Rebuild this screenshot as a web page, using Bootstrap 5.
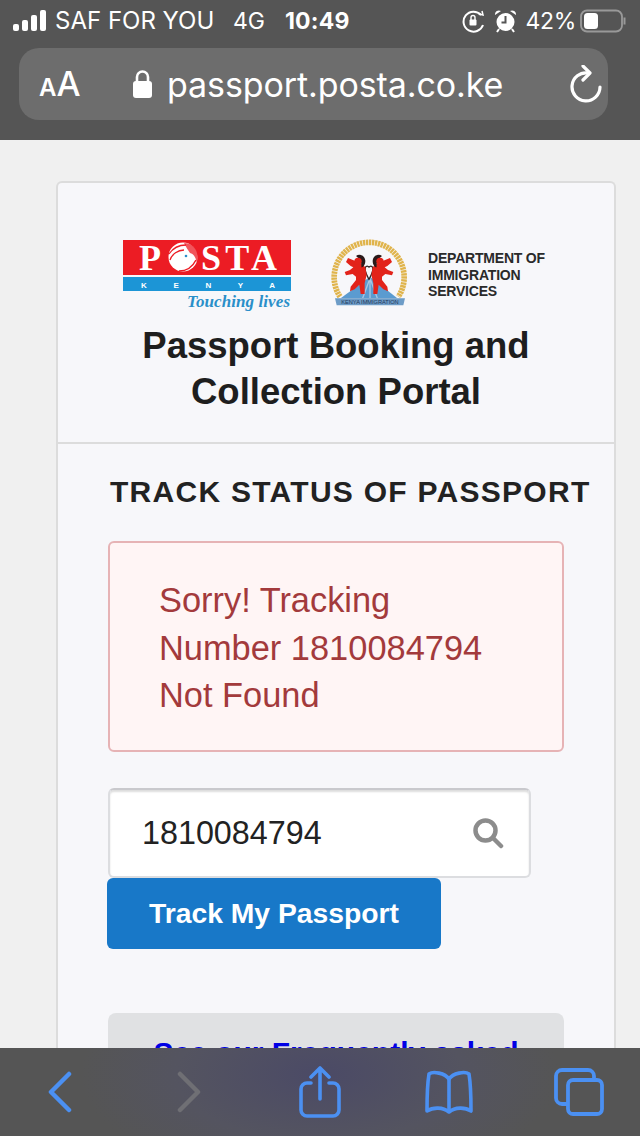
<!DOCTYPE html>
<html lang="en">
<head>
<meta charset="utf-8">
<title>Track status of passport</title>
<link href="https://cdn.jsdelivr.net/npm/bootstrap@5.3.0/dist/css/bootstrap.min.css" rel="stylesheet">
<style>
html,body{margin:0;height:1136px;overflow:hidden}
body{font-family:"Liberation Sans",Arial,sans-serif;background:#f0f0f0;color:#222}
.phone{height:1136px}
.topchrome{height:140px;background:#555;color:#fff;font-family:Inter,"Liberation Sans",sans-serif;flex:none}
.statusrow{height:48px;padding:0 14px 6px 13px;font-size:23px}
.carrier{margin-left:9px;width:178px;white-space:nowrap;font-size:24px}
.net{width:52px}
.clock{font-weight:700;letter-spacing:.2px}
.urlpill{height:72px;margin:0 32px 0 19px;background:#6d6d6d;border-radius:20px;padding:0 19px}
.aa{font-size:34px;font-weight:500;line-height:1;width:94px;white-space:nowrap;margin-left:1px}
.aa small{font-size:24px;font-weight:600}
.urltext{font-size:34px;margin-left:15px;white-space:nowrap;letter-spacing:-.1px}
.viewport{flex:1 1 auto;overflow:hidden;padding:41px 24px 0 56px;min-height:0}
.portal{width:560px;background:#f7f7fa;border:2px solid #dcdcdc;border-bottom:0;border-radius:6px 6px 0 0;height:1200px}
.portalhead{height:261px;border-bottom:2px solid #dcdcdc;padding-top:57px}
.logos{height:70px;padding-left:65px}
.posta{flex:none;margin-bottom:2px}
.emblem{flex:none;margin:0 0 5px 27px}
.dept{font-size:14px;font-weight:700;line-height:16.5px;color:#2a2a2a;margin-left:8px;letter-spacing:-.2px}
.ptitle{font-size:36.5px;font-weight:700;line-height:46px;color:#1e1e1e;margin:13px 0 0;text-align:center}
.portalbody{padding:26px 0 0 50px}
.ttl{font-size:30px;font-weight:700;letter-spacing:1.27px;line-height:44px;color:#222;margin:0 0 27px 2px;white-space:nowrap}
.errbox{width:456px;height:211px;background:#fff5f5;border:2px solid #e6b3b5;border-radius:6px;color:#a33a3c;font-size:34.4px;line-height:47.5px;padding:34px 66px 0 49px;margin:0}
.searchbox{width:423px;height:90px;margin-top:36px;background:#fff;border:2px solid #dcdde0;border-top-color:#c9c9cd;border-radius:6px;padding:0 25px 0 32px;box-shadow:inset 0 2px 2px #ddd;font-size:32.3px;color:#222}
.trackbtn{width:334px;height:71px;margin-left:-1px;background:#1878c8;border:0;border-radius:6px;color:#fff;font-size:28.3px;font-weight:700;display:block;padding:0}
.trackbtn:hover{background:#1878c8;color:#fff}
.faq{width:456px;height:120px;margin-top:64px;background:#e0e1e3;border-radius:8px;text-align:center;padding-top:20px;font-size:30px;font-weight:700;line-height:40px}
.faq a{color:#0000e6;text-decoration:none}
.botchrome{height:88px;flex:none;background:radial-gradient(ellipse 240px 110px at 50% 30%,#4b4a66 0%,#545460 60%,#555 100%);padding:0 0 0 46px}
.ic2{margin-left:97px}.ic3{margin-left:96px}.ic4{margin-left:84px}.ic5{margin-left:81px}
</style>
</head>
<body>
<div class="phone d-flex flex-column">
  <div class="topchrome">
    <div class="statusrow d-flex align-items-center">
      <svg width="33" height="22" viewBox="0 0 33 22" fill="#fff"><rect x="0" y="14" width="6" height="7" rx="2"/><rect x="9" y="10" width="6" height="11" rx="2"/><rect x="18" y="5" width="6" height="16" rx="2"/><rect x="27" y="0" width="6" height="21" rx="2"/></svg>
      <span class="carrier">SAF FOR YOU</span>
      <span class="net">4G</span>
      <span class="clock">10:49</span>
      <span class="ms-auto d-flex align-items-center">
        <svg width="24" height="24" viewBox="0 0 24 24" fill="none" stroke="#fff" stroke-width="2"><path d="M19 6A10 10 0 1 0 21 16"/><path d="M17 5l4 1-1-4" stroke-width="1.5"/><rect x="7.5" y="10.5" width="7" height="6" rx="1" fill="#fff" stroke="none"/><path d="M9 11V8.5a2 2 0 0 1 4 0V11" stroke-width="1.4"/></svg>
        <svg class="ms-2" width="23" height="24" viewBox="0 0 23 24" fill="#fff"><circle cx="11.5" cy="13" r="9"/><path d="M1 6a4 4 0 0 1 6-4zM22 6a4 4 0 0 0-6-4z"/><path d="M11.5 7v6.500h-4" stroke="#555" stroke-width="2" fill="none"/><path d="M5 20l-2 3M18 20l2 3" stroke="#fff" stroke-width="2"/></svg>
        <span class="ms-2" style="letter-spacing:-.3px">42%</span>
        <svg class="ms-1" width="46" height="24" viewBox="0 0 46 24" fill="none"><rect x="1" y="1.500" width="41" height="21" rx="6" stroke="#999" stroke-width="1.800"/><rect x="4" y="4" width="14" height="16" rx="3.500" fill="#fff"/><path d="M44.500 8.500v7" stroke="#999" stroke-width="2"/></svg>
      </span>
    </div>
    <div class="urlpill d-flex align-items-center">
      <span class="aa"><small>A</small>A</span>
      <svg width="19" height="28" viewBox="0 0 19 28" fill="#fff"><rect x="0" y="11" width="19" height="17" rx="3"/><path d="M4 12V7a5.500 5.500 0 0 1 11 0v5" fill="none" stroke="#fff" stroke-width="2.600"/></svg>
      <span class="urltext">passport.posta.co.ke</span>
      <svg class="ms-auto" width="32" height="38" viewBox="0 0 32 38" fill="none" stroke="#fff" stroke-width="3.200" stroke-linecap="round" stroke-linejoin="round" style="margin-right:-13px"><path d="M18 8A14 14 0 1 0 30 22"/><path d="M13 1l7 7-7 7"/></svg>
    </div>
  </div>

  <div class="viewport">
    <div class="portal">
      <div class="portalhead">
        <div class="logos d-flex align-items-center">
          <svg class="posta" width="170" height="76" viewBox="0 -4 170 76">
            <rect x="0" y="0" width="168" height="35" fill="#ec1c24"/>
            <rect x="0" y="37" width="168" height="14" fill="#1c95d6"/>
            <text x="16" y="30" font-family="Liberation Serif,serif" font-weight="700" font-size="36" fill="#fff">P</text>
            <circle cx="60" cy="17" r="14.500" fill="#fff"/>
            <path d="M46 14c4-6 10-9 17-9M47 20c2-6 8-10 14-10" fill="none" stroke="#ec1c24" stroke-width="1.300"/>
            <path d="M61 3c7 0 12 4 14 11l-1 9c-1-5-3-9-7-10-2-3-4-6-6-10z" fill="#ec1c24" opacity=".75"/>
            <path d="M56 31c7 0 13-3 17-11" fill="none" stroke="#ec1c24" stroke-width="1.500"/>
            <circle cx="63" cy="16" r="1.300" fill="#2a8fc9"/>
            <text x="78" y="30" font-family="Liberation Serif,serif" font-weight="700" font-size="36" fill="#fff" textLength="76">STA</text>
            <text x="18" y="48" font-family="Liberation Sans,sans-serif" font-weight="700" font-size="8" fill="#fff" textLength="134">K E N Y A</text>
            <text x="64" y="67" font-family="Liberation Serif,serif" font-style="italic" font-weight="700" font-size="17" fill="#2a8fc9" textLength="103">Touching lives</text>
          </svg>
          <svg class="emblem" width="100" height="85" viewBox="0 0 300 255">
            <path d="M60 200A105 105 0 1 1 235 200" fill="none" stroke="#e0b44c" stroke-width="17" stroke-dasharray="7 2"/>
            <path d="M150 140L232 205H62z" fill="#5b9bd0"/>
            <path d="M128 205l22-60M150 205v-65M172 205l-22-60" stroke="#a8c6e2" stroke-width="4"/>
            <path d="M148 150c-6-12-16-26-12-38 3-5 8-5 11 0M146 150c6-12 16-26 12-38-3-5-8-5-11 0" fill="none" stroke="#2c2222" stroke-width="4"/>
            <g>
              <path d="M84 84L78 96 92 108 100 112 90 120 74 126 78 136 98 132 108 140 108 150 92 170 90 184 104 178 118 164 122 192 134 192 134 160 140 135 136 112 128 104 104 92z" fill="#e2231a"/>
              <path d="M108 78C118 70 134 76 136 92 136 104 130 112 124 112 126 100 120 86 108 78z" fill="#2a1a1a"/>
              <circle cx="114" cy="94" r="11" fill="#e2231a"/>
            </g>
            <g transform="translate(294,0) scale(-1,1)">
              <path d="M84 84L78 96 92 108 100 112 90 120 74 126 78 136 98 132 108 140 108 150 92 170 90 184 104 178 118 164 122 192 134 192 134 160 140 135 136 112 128 104 104 92z" fill="#e2231a"/>
              <path d="M108 78C118 70 134 76 136 92 136 104 130 112 124 112 126 100 120 86 108 78z" fill="#2a1a1a"/>
              <circle cx="114" cy="94" r="11" fill="#e2231a"/>
            </g>
            <path d="M45 205H255L250 226H50z" fill="#6d9cc7"/>
            <text x="150" y="221" font-family="Liberation Sans,sans-serif" font-size="17" text-anchor="middle" fill="#24365a" textLength="172">KENYA IMMIGRATION</text>
          </svg>
          <div class="dept">DEPARTMENT OF<br>IMMIGRATION<br>SERVICES</div>
        </div>
        <h1 class="ptitle">Passport Booking and<br>Collection Portal</h1>
      </div>
      <div class="portalbody">
        <h2 class="ttl">TRACK STATUS OF PASSPORT</h2>
        <div class="errbox" role="alert">Sorry! Tracking Number 1810084794 Not Found</div>
        <div class="searchbox d-flex align-items-center">
          <span>1810084794</span>
          <svg class="ms-auto" width="31" height="31" viewBox="0 0 31 31" fill="none" stroke="#8c8c8c" stroke-width="4.500" stroke-linecap="round"><circle cx="12.500" cy="12.500" r="10"/><path d="M20 20l8 8"/></svg>
        </div>
        <button type="button" class="btn trackbtn">Track My Passport</button>
        <div class="faq"><a href="#">See our Frequently asked</a></div>
      </div>
    </div>
  </div>

  <div class="botchrome d-flex align-items-center">
    <svg width="30" height="42" viewBox="0 0 30 42" fill="none" stroke="#4b90f2" stroke-width="4.500" stroke-linecap="round" stroke-linejoin="round"><path d="M23 3L5 21l18 18"/></svg>
    <svg class="ic2" width="30" height="42" viewBox="0 0 30 42" fill="none" stroke="#6f6f74" stroke-width="4.500" stroke-linecap="round" stroke-linejoin="round"><path d="M7 3l18 18L7 39"/></svg>
    <svg class="ic3" width="42" height="52" viewBox="0 0 42 52" fill="none" stroke="#4b90f2" stroke-width="3.600" stroke-linecap="round" stroke-linejoin="round"><path d="M12 17H8a6 6 0 0 0-6 6v21a6 6 0 0 0 6 6h26a6 6 0 0 0 6-6V23a6 6 0 0 0-6-6h-4"/><path d="M21 33V3M12 11l9-9 9 9"/></svg>
    <svg class="ic4" width="48" height="44" viewBox="0 0 48 44" fill="none" stroke="#4b90f2" stroke-width="3.600" stroke-linejoin="round"><path d="M24 9C20 3 8 1 4 4 3 10 2 30 2 41c6-4 16-4 22 1 6-5 16-5 22-1 0-11-1-31-2-37-4-3-16-1-20 5z"/><path d="M24 9v33"/></svg>
    <svg class="ic5" width="50" height="48" viewBox="0 0 50 48" fill="none" stroke="#4b90f2" stroke-width="3.800" stroke-linejoin="round"><rect x="14" y="12" width="34" height="34" rx="5"/><path d="M14 36H8a6 6 0 0 1-6-6V8a6 6 0 0 1 6-6h26a6 6 0 0 1 6 6v4"/></svg>
  </div>
</div>
<script src="https://cdn.jsdelivr.net/npm/bootstrap@5.3.0/dist/js/bootstrap.bundle.min.js"></script>
</body>
</html>
